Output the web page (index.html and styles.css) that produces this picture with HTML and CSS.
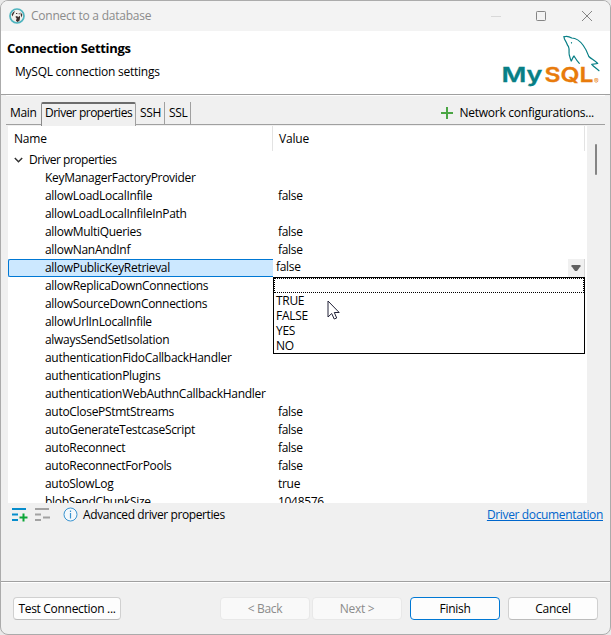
FILE: index.html
```html
<!DOCTYPE html>
<html lang="en">
<head>
<meta charset="utf-8">
<title>Connect to a database</title>
<link rel="stylesheet" href="styles.css">
</head>
<body>
<div class="window">
  <header class="titlebar">
    <svg class="app-icon" width="16" height="16" viewBox="0 0 16 16"><circle cx="8" cy="8" r="7" fill="#f4f1ee" stroke="#4fb4bf" stroke-width="1.7"/><path d="M2.7 6.5 4 4.2 6 3 5 5.2 3.3 8.5zM11.5 4.2l1.8 2.3-.5 3-1-2zM6.3 8.700l1.700-.6 1.300 1.200 1-1.500.8 1-.5 3.700-2 1.600-1.700-1.300.8-2.400zM7 5h1.300v1H7zM9.700 5.300h1v1h-1z" fill="#3e302e"/></svg>
    <span class="title">Connect to a database</span>
    <svg class="controls" width="104" height="12" viewBox="0 0 104 12" fill="none"><path d="M1 6.500h10" stroke="#d8d8d8"/><rect x="46.500" y="1.500" width="9" height="9" rx=".8" stroke="#858585"/><path d="m92 1 10 10M102 1 92 11" stroke="#858585"/></svg>
  </header>
  <section class="banner">
    <div>
      <h1>Connection Settings</h1>
      <p>MySQL connection settings</p>
    </div>
    <svg class="logo" width="104" height="58" viewBox="0 0 104 58">
      <g fill="none" stroke="#087f86" stroke-width="1.200" stroke-linecap="round" stroke-linejoin="round"><path d="M65 2.700c3-1 5-.5 7.700 1.300 4 0 8 2.500 11.600 7.500 3 4 4 7 5.500 11 2.500 2.500 6 4 8.900 7l-6 .8c2 2.500 4.500 4 7.300 6.400"/><path d="M65 2.700c0 3 2 4.500 2.800 6.800.5 1.500.8 2 1.700 3.200 1.300 3 0 5.500.8 8.300.5 2 1 4.300 1.900 6 1.200-1.300 1.200-3.500 2.800-5 1.500 2.500 3 5 5.300 7.300"/><path d="M72.500 8.500v.5"/></g>
      <g class="logo-type"><text class="teal" x="2.500" y="47.500" textLength="41" lengthAdjust="spacingAndGlyphs">My</text><text class="orange" x="45.500" y="47.500" textLength="49" lengthAdjust="spacingAndGlyphs">SQL</text></g>
      <text class="reg" x="95" y="50">®</text>
    </svg>
  </section>
  <nav class="tabs">
    <span class="tab main">Main</span><span class="tab active">Driver properties</span><span class="tab ssh">SSH</span><span class="tab ssl">SSL</span>
    <span class="network"><svg width="12" height="12" viewBox="0 0 12 12"><path d="M6 0v12M0 6h12" stroke="#4aa544" stroke-width="2"/></svg><span>Network configurations...</span></span>
  </nav>
  <div class="body">
    <div class="table">
      <div class="head"><span class="name">Name</span><span class="value">Value</span></div>
      <div class="group"><svg width="9" height="6" viewBox="0 0 9 6"><path d="m.8 1 3.700 3.700L8.200 1" fill="none" stroke="#333" stroke-width="1.500"/></svg><span>Driver properties</span></div>
      <div class="row"><span>KeyManagerFactoryProvider</span></div>
      <div class="row"><span>allowLoadLocalInfile</span><span>false</span></div>
      <div class="row"><span>allowLoadLocalInfileInPath</span></div>
      <div class="row"><span>allowMultiQueries</span><span>false</span></div>
      <div class="row"><span>allowNanAndInf</span><span>false</span></div>
      <div class="row selected"><span>allowPublicKeyRetrieval</span><div class="combo"><span>false</span><i class="arrow"><svg width="10" height="8" viewBox="0 0 10 8"><path d="M.5 1h9v1.300L6 7H4L.5 2.300z" fill="#606060"/></svg></i>
        <div class="menu"><div class="blank"></div><div>TRUE</div><div>FALSE</div><div>YES</div><div>NO</div>
          <svg class="cursor" width="13" height="20" viewBox="0 0 13 20"><path d="M1 1v16l3.700-3.500L7.200 19l2.500-1-2.400-5.500h4.900z" fill="#fff" stroke="#222238"/></svg>
        </div></div></div>
      <div class="row covered"><span>allowReplicaDownConnections</span></div>
      <div class="row covered"><span>allowSourceDownConnections</span></div>
      <div class="row covered"><span>allowUrlInLocalInfile</span></div>
      <div class="row covered"><span>alwaysSendSetIsolation</span></div>
      <div class="row"><span>authenticationFidoCallbackHandler</span></div>
      <div class="row"><span>authenticationPlugins</span></div>
      <div class="row"><span>authenticationWebAuthnCallbackHandler</span></div>
      <div class="row"><span>autoClosePStmtStreams</span><span>false</span></div>
      <div class="row"><span>autoGenerateTestcaseScript</span><span>false</span></div>
      <div class="row"><span>autoReconnect</span><span>false</span></div>
      <div class="row"><span>autoReconnectForPools</span><span>false</span></div>
      <div class="row"><span>autoSlowLog</span><span>true</span></div>
      <div class="row"><span>blobSendChunkSize</span><span>1048576</span></div>
    </div>
    <div class="scroll"></div>
  </div>
  <div class="tools">
    <svg width="16" height="14" viewBox="0 0 16 14"><path d="M0 1h14M0 6.500h6M0 12h6" stroke="#078dcc" stroke-width="2"/><path d="M11.500 5.500v8M7.500 9.500h8" stroke="#0ba537" stroke-width="2"/></svg>
    <svg class="remove" width="16" height="14" viewBox="0 0 16 14"><path d="M0 1h14M0 6.500h6M0 12h6M8 9.500h7" stroke="#a2a2a2" stroke-width="2"/></svg>
    <svg class="info" width="15" height="15" viewBox="0 0 15 15"><circle cx="7.500" cy="7.500" r="6.500" fill="#f3f8fc" stroke="#3a94d0"/><path d="M7.500 6v5.500M7.500 3.500V5" stroke="#3a94d0" stroke-width="1.200"/></svg>
    <span class="advanced">Advanced driver properties</span>
    <a>Driver documentation</a>
  </div>
  <footer>
    <button class="test">Test Connection ...</button>
    <button class="disabled back">&lt; Back</button>
    <button class="disabled next">Next &gt;</button>
    <button class="finish">Finish</button>
    <button class="cancel">Cancel</button>
  </footer>
</div>
</body>
</html>
```

FILE: styles.css
```css
* { box-sizing: border-box; }
body { margin: 0; width: 611px; height: 635px; overflow: hidden; background: #e9e9e9; font: 12px/18px "Open Sans", "Noto Sans", sans-serif; letter-spacing: -.3px; color: #000; white-space: nowrap; }
.window { width: 611px; height: 635px; display: flex; flex-direction: column; overflow: hidden; border: 1px solid #ababab; border-radius: 8px; background: #f0f0f0; }
.titlebar { flex: none; height: 30px; display: flex; align-items: center; padding: 0 16px 0 8px; background: #f3f3f3; color: #8b8b8b; }
.title { margin-left: 6px; letter-spacing: -.24px; }
.controls { margin-left: auto; }
.banner { flex: none; height: 64px; display: flex; justify-content: space-between; padding: 8px 7px 0 6px; background: #fff; border-bottom: 1px solid #a0a0a0; }
h1 { margin: 0; font-size: 13px; line-height: 18px; letter-spacing: -.33px; }
p { margin: 6px 0 0 8px; letter-spacing: -.25px; }
.logo { margin-top: -5px; }
.logo-type { font: 600 20.5px Inter, sans-serif; letter-spacing: 0; }
.teal { fill: #087f86; stroke: #087f86; stroke-width: .3; }
.orange { fill: #e87b0c; stroke: #e87b0c; stroke-width: .3; }
.reg { font: 7px Inter, sans-serif; fill: #e87b0c; }
.tabs { flex: none; display: flex; height: 30px; margin: 0 5px; padding-top: 6px; border-top: 1px solid #fff; border-bottom: 1px solid #a0a0a0; }
.tab { height: 22px; padding: 2px 0 0 4px; border-right: 1px solid #a0a0a0; }
.main { width: 35px; border-right: 0; }
.active { width: 95px; height: 24px; padding: 0 0 0 3px; border-left: 1px solid #8a8a8a; border-top: 2px solid #6c6c6c; border-radius: 2px 2px 0 0; background: #f0f0f0; letter-spacing: -.5px; }
.ssh { width: 29px; }
.ssl { width: 26px; }
.network { display: flex; align-items: center; height: 22px; margin-left: auto; padding-right: 11px; gap: 6px; letter-spacing: -.25px; }
.body { flex: none; display: flex; height: 378px; padding: 1px 13px 0 7px; justify-content: space-between; }
.table { width: 579px; height: 377px; overflow: hidden; background: #fff; }
.head { display: flex; height: 25px; line-height: 25px; width: 577px; border-right: 1px solid #e3e3e3; letter-spacing: -.2px; }
.name { width: 265px; padding-left: 6px; border-right: 1px solid #e3e3e3; }
.value { padding-left: 6px; }
.group { display: flex; align-items: center; height: 18px; padding-left: 6px; gap: 6px; letter-spacing: -.48px; }
.row { display: grid; grid-template-columns: 233px 1fr; height: 18px; padding-left: 37px; }
.covered { grid-template-columns: 227px; }
.selected { position: relative; width: 577px; padding-left: 36px; grid-template-columns: 228px 1fr; background: #cce8ff; border: 1px solid #0078d4; border-right: 0; border-radius: 2px 0 0 2px; line-height: 16px; }
.combo { position: relative; height: 18px; margin-top: -1px; padding: 0 0 0 3px; background: #fff; }
.arrow { position: absolute; right: 0; top: 0; width: 17px; height: 18px; display: grid; place-items: center; background: #f0f0f0; border-right: 1px solid #d5d5d5; }
.menu { position: absolute; z-index: 2; top: 18px; left: 0; width: 312px; height: 77px; border: 1px solid #000; background: #fff; line-height: 15px; padding-left: 2px; }
.blank { height: 15px; margin-left: -2px; border: 1px dotted #000; }
.cursor { position: absolute; left: 53px; top: 22px; }
.scroll { width: 2px; height: 31px; margin-top: 18px; border-radius: 1px; background: #858585; }
.tools { flex: none; height: 78px; display: flex; align-items: flex-start; padding: 4px 7px 0 11px; }
.tools svg { margin-top: 1px; }
.tools .remove { margin-left: 7px; }
.tools .info { margin: 0 5px 0 12px; }
.advanced { letter-spacing: -.4px; }
a { margin-left: auto; color: #0066cc; text-decoration: underline; letter-spacing: -.35px; }
.tools span, a { margin-top: -1px; }
footer { flex: 1; display: flex; align-items: flex-start; border-top: 1px solid #a0a0a0; box-shadow: inset 0 1px #fff; padding: 15px 11px 0 12px; }
button { height: 23px; padding: 0; border: 1px solid #d0d0d0; border-bottom-color: #bcbcbc; border-radius: 4px; background: #fdfdfd; font: inherit; letter-spacing: inherit; color: #000; }
.test { width: 108px; }
.disabled { border-color: #e8e8e8; background: #f9f9f9; color: #8b8b8b; }
.back { width: 90px; margin-left: 99px; }
.next { width: 90px; margin-left: 2px; }
.finish { width: 90px; margin-left: 8px; border-color: #0078d4; }
.cancel { width: 90px; margin-left: 8px; }
```
